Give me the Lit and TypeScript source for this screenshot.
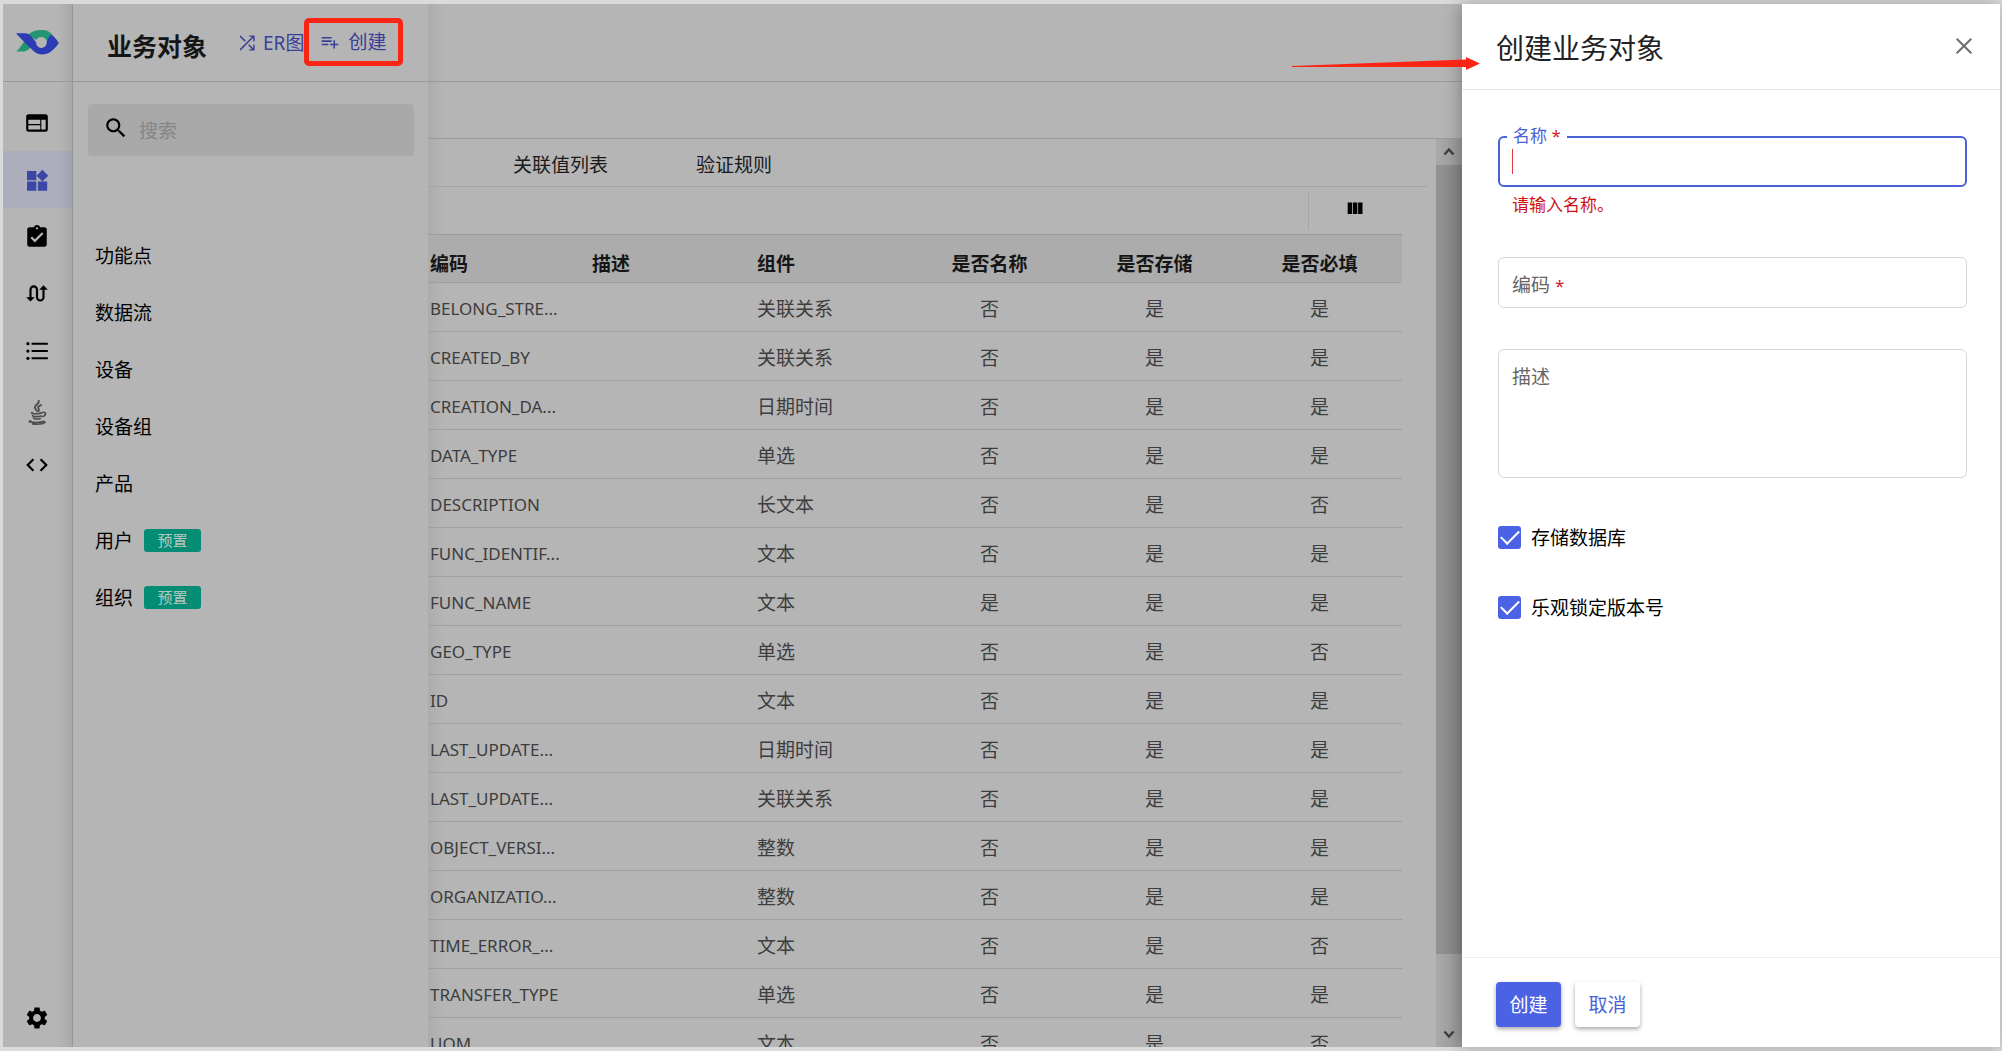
import { LitElement, html, css, svg } from "lit";
import { customElement } from "lit/decorators.js";
import { classMap } from "lit/directives/class-map.js";

const icons: Record<string, unknown> = {
  web: svg`<path d="M20 4H4c-1.1 0-1.99.9-1.99 2L2 18c0 1.1.9 2 2 2h16c1.1 0 2-.9 2-2V6c0-1.1-.9-2-2-2zm-5 14H4v-4h11v4zm0-5H4V9h11v4zm5 5h-4V9h4v9z"/>`,
  widgets: svg`<path d="M2.8 3.6h8.6v8.6H2.8zM2.8 13.4h8.6V22H2.8zM12.8 13.4h8.6V22h-8.6zM17 2.6l5.4 5.4-5.4 5.4L11.600 8z"/>`,
  task: svg`<path d="M19 3h-4.180C14.400 1.840 13.300 1 12 1c-1.300 0-2.400.84-2.820 2H5c-1.100 0-2 .9-2 2v14c0 1.100.9 2 2 2h14c1.100 0 2-.9 2-2V5c0-1.100-.9-2-2-2zm-7 0c.55 0 1 .45 1 1s-.45 1-1 1-1-.45-1-1 .45-1 1-1zm-2 14l-4-4 1.410-1.410L10 14.170l6.590-6.590L18 9l-8 8z"/>`,
  flow: svg`<path d="M18 4l-4 4h3v7c0 1.100-.9 2-2 2s-2-.9-2-2V8c0-2.210-1.790-4-4-4S5 5.790 5 8v7H2l4 4 4-4H7V8c0-1.100.9-2 2-2s2 .9 2 2v7c0 2.210 1.790 4 4 4s4-1.790 4-4V8h3l-4-4z"/>`,
  list: svg`<path d="M7 4.300h15v2H7zM7 11h15v2H7zM7 17.700h15v2H7z"/><circle cx="3.600" cy="5.300" r="1.500"/><circle cx="3.600" cy="12" r="1.500"/><circle cx="3.600" cy="18.700" r="1.500"/>`,
  java: svg`<g fill="none" stroke="#4d4d4d" stroke-linecap="round"><path stroke-width="1.700" d="M13.500 1.500c1.500 3-4.800 4.200-3.300 7.200.4.800 1.300 1.400 1.600 2.300M15.800 5.600c-2.600 1-3.500 2.200-2.300 3.600.7.900.3 1.500-.4 2"/><path stroke-width="1.500" d="M7.500 12.600c-2 .9 3 1.600 8.700.2M8 15.200c-.5 1.300 5 1.300 7.500.4M8.800 17.600c0 1 4 1.200 6.200.3M17.500 12.300c3.600-.3 2.800 3.200-.6 3.900M6 20c-5 1.600 8 2.500 12.500.6M8 23c4.500.5 9.500 0 11.500-1.400"/></g>`,
  code: svg`<path d="M9.400 16.600L4.800 12l4.600-4.600L8 6l-6 6 6 6 1.400-1.400zm5.200 0l4.600-4.600-4.600-4.600L16 6l6 6-6 6-1.400-1.400z"/>`,
  gear: svg`<path fill-rule="evenodd" d="M19.140 12.940c.04-.3.06-.61.06-.94 0-.32-.02-.64-.07-.94l2.030-1.580c.18-.14.23-.41.12-.61l-1.920-3.320c-.12-.22-.37-.29-.59-.22l-2.390.96c-.5-.38-1.030-.7-1.620-.94L14.400 2.810c-.04-.24-.24-.41-.48-.41h-3.840c-.24 0-.43.17-.47.41l-.36 2.540c-.59.24-1.130.57-1.620.94l-2.390-.96c-.22-.08-.47 0-.59.22L2.740 8.870c-.12.21-.08.47.12.61l2.030 1.580c-.05.3-.09.63-.09.94s.02.64.07.94l-2.030 1.580c-.18.14-.23.41-.12.61l1.920 3.320c.12.22.37.29.59.22l2.390-.96c.5.38 1.030.7 1.620.94l.36 2.540c.05.24.24.41.48.41h3.840c.24 0 .44-.17.47-.41l.36-2.540c.59-.24 1.130-.56 1.620-.94l2.390.96c.22.08.47 0 .59-.22l1.920-3.320c.12-.22.07-.47-.12-.61l-2.010-1.580zM12 15.600c-1.980 0-3.600-1.620-3.600-3.600s1.620-3.600 3.600-3.600 3.600 1.620 3.600 3.600-1.620 3.600-3.600 3.600z"/>`,
  shuffle: svg`<path fill="none" stroke="currentColor" stroke-width="1.600" d="M4.500 4.500l5.600 5.600M4.500 19.500L19 5M13.800 13.800L19 19M14.500 4.500h5V10M14.500 19.500h5V14"/>`,
  playlistAdd: svg`<path d="M14 10H2v1.900h12V10zm0-4H2v1.900h12V6zm4 8v-4h-1.900v4h-4v1.900h4v4H18v-4h4V14h-4zM2 15.900h8V14H2v1.900z"/>`,
  search: svg`<path d="M15.500 14h-.79l-.28-.27C15.410 12.590 16 11.110 16 9.500 16 5.910 13.090 3 9.500 3S3 5.910 3 9.500 5.910 16 9.500 16c1.610 0 3.090-.59 4.230-1.570l.27.28v.79l5 4.990L20.490 19l-4.990-5zm-6 0C7.010 14 5 11.990 5 9.500S7.010 5 9.500 5 14 7.010 14 9.500 11.990 14 9.500 14z"/>`,
  columns: svg`<path d="M4 6h4.800v12.500H4zM9.700 6h4.800v12.500H9.700zM15.400 6h4.800v12.500h-4.800z"/>`,
  close: svg`<path fill="none" stroke="currentColor" stroke-width="2.200" d="M4 4l16 16M20 4L4 20"/>`,
  up: svg`<path fill="none" stroke="currentColor" stroke-width="4.500" d="M3 17l9-10 9 10"/>`,
  down: svg`<path fill="none" stroke="currentColor" stroke-width="4.500" d="M3 7l9 10 9-10"/>`,
};

const icon = (name: string, cls = "i26") =>
  html`<svg class="icon ${cls}" viewBox="0 0 24 24" aria-hidden="true">${icons[name]}</svg>`;

const nav = [
  ["web", "页面"],
  ["widgets", "业务对象"],
  ["task", "任务"],
  ["flow", "流程"],
  ["list", "列表"],
  ["java", "Java"],
  ["code", "代码"],
];

const objects = [
  { name: "功能点" },
  { name: "数据流" },
  { name: "设备" },
  { name: "设备组" },
  { name: "产品" },
  { name: "用户", preset: true },
  { name: "组织", preset: true },
];

const heads = ["编码", "描述", "组件", "是否名称", "是否存储", "是否必填"];

const rows = [
  ["BELONG_STRE...", "关联关系", "否", "是", "是"],
  ["CREATED_BY", "关联关系", "否", "是", "是"],
  ["CREATION_DA...", "日期时间", "否", "是", "是"],
  ["DATA_TYPE", "单选", "否", "是", "是"],
  ["DESCRIPTION", "长文本", "否", "是", "否"],
  ["FUNC_IDENTIF...", "文本", "否", "是", "是"],
  ["FUNC_NAME", "文本", "是", "是", "是"],
  ["GEO_TYPE", "单选", "否", "是", "否"],
  ["ID", "文本", "否", "是", "是"],
  ["LAST_UPDATE...", "日期时间", "否", "是", "是"],
  ["LAST_UPDATE...", "关联关系", "否", "是", "是"],
  ["OBJECT_VERSI...", "整数", "否", "是", "是"],
  ["ORGANIZATIO...", "整数", "否", "是", "是"],
  ["TIME_ERROR_...", "文本", "否", "是", "否"],
  ["TRANSFER_TYPE", "单选", "否", "是", "是"],
  ["UOM", "文本", "否", "是", "否"],
];

@customElement("app-root")
export class AppRoot extends LitElement {
  static styles = css`
    :host {
      display: block;
      font-family: "Noto Sans", "Noto Sans CJK SC", sans-serif;
      font-size: 19px;
      line-height: 28px;
      color: #000;
    }
    * {
      box-sizing: border-box;
    }
    button,
    input,
    textarea {
      font: inherit;
      color: inherit;
      border: 0;
      background: none;
      padding: 0;
      margin: 0;
      outline: 0;
    }
    a {
      color: inherit;
      text-decoration: none;
    }
    .icon {
      display: block;
      flex: none;
      fill: currentColor;
    }
    .i26 { width: 26px; height: 26px; }
    .i22 { width: 22px; height: 22px; }
    .i20 { width: 20px; height: 20px; }
    .i12 { width: 12px; height: 12px; }

    .frame {
      position: relative;
      height: 100vh;
      padding: 4px 2px 4px 3px;
      background: #dadada;
      display: grid;
      grid-template-columns: 70px 355px minmax(0, 1fr) 538px;
      grid-template-rows: minmax(0, 1fr);
      overflow: hidden;
    }

    .rail {
      display: flex;
      flex-direction: column;
      border-right: 1px solid #969696;
      background: linear-gradient(90deg, #b5b5b5 80%, #a9a9a9);
    }
    .logo {
      height: 78px;
      flex: none;
      display: flex;
      align-items: center;
      padding-left: 13px;
      border-bottom: 1px solid #9b9b9b;
    }
    .menu {
      flex: 1;
      display: flex;
      flex-direction: column;
      padding-top: 12px;
    }
    .menu a {
      height: 57px;
      display: flex;
      align-items: center;
      padding-left: 21px;
    }
    .menu a.active {
      color: #3b46a6;
      background: linear-gradient(90deg, #adaebb 80%, #a2a3b0);
    }
    .menu a.low {
      padding-top: 8px;
    }
    .settings {
      display: flex;
      padding: 16px 21px;
    }

    .panel {
      background: #b5b5b5;
    }
    .panel-head {
      height: 78px;
      padding: 0 24px 0 34px;
      display: flex;
      align-items: center;
      border-bottom: 1px solid #9b9b9b;
      color: #3a4096;
      white-space: nowrap;
    }
    .panel-head h1 {
      margin: 0;
      width: 129px;
      font-size: 25px;
      line-height: 36px;
      font-weight: 700;
      color: #151515;
      padding-top: 6px;
    }
    .er {
      display: flex;
      align-items: center;
      gap: 5px;
      width: 68px;
    }
    .mark {
      width: 99px;
      height: 48px;
      margin-bottom: 2px;
      border: 5px solid #fb2516;
      border-radius: 5px;
      display: flex;
      flex: none;
      align-items: center;
      justify-content: center;
    }
    .mark button {
      display: flex;
      align-items: center;
      gap: 8px;
      cursor: pointer;
    }
    .search {
      margin: 22px 14px 0 15px;
      height: 52px;
      border-radius: 4px;
      background: #a9a9a9;
      display: flex;
      align-items: center;
      gap: 10px;
      padding: 0 15px;
    }
    .search .icon {
      margin-bottom: 4px;
    }
    .search input {
      flex: 1;
      min-width: 0;
      height: 32px;
      padding-top: 2px;
    }
    .search input::placeholder {
      color: #858585;
      opacity: 1;
    }
    .objects {
      list-style: none;
      margin: 71px 0 0;
      padding: 0 0 0 22px;
    }
    .objects a {
      height: 57px;
      display: flex;
      align-items: center;
      gap: 11px;
    }
    .badge {
      width: 57px;
      height: 23px;
      border-radius: 3px;
      background: #058c74;
      color: #b5c9c5;
      font-size: 15px;
      line-height: 23px;
      text-align: center;
    }

    .main {
      display: flex;
      flex-direction: column;
      min-width: 0;
      color: #1a1a1a;
      background:
        linear-gradient(90deg, rgba(0, 0, 0, 0.05), transparent 16px),
        #b5b5b5;
    }
    .main-top {
      height: 78px;
      flex: none;
      border-bottom: 1px solid #9b9b9b;
    }
    .main-sub {
      height: 57px;
      flex: none;
      border-bottom: 1px solid #9b9b9b;
    }
    .scroll {
      flex: 1;
      min-height: 0;
      display: flex;
    }
    .content {
      flex: 1;
      min-width: 0;
      overflow: hidden;
    }
    .tabs {
      height: 48px;
      margin-right: 9px;
      padding: 4px 0 0 85px;
      display: flex;
      align-items: center;
      gap: 88px;
      border-bottom: 1px solid #a4a4a4;
    }
    .tools {
      height: 47px;
      margin-right: 34px;
      display: flex;
      align-items: center;
      justify-content: flex-end;
    }
    .tools button {
      width: 94px;
      height: 39px;
      display: flex;
      align-items: center;
      padding: 0 0 6px 35px;
      border-left: 1px solid #a6a6a6;
      color: #000;
    }
    .grid-wrap {
      margin-right: 34px;
    }
    table {
      width: 100%;
      table-layout: fixed;
      border-collapse: separate;
      border-spacing: 0;
    }
    th,
    td {
      width: 165px;
      height: 49px;
      padding: 4px 15px 0;
      border-bottom: 1px solid #9f9f9f;
      text-align: center;
      white-space: nowrap;
      color: #3d3d3d;
      font-weight: 400;
    }
    th {
      padding-top: 10px;
      border-top: 1px solid #9b9b9b;
      background: #acacac;
      color: #161616;
      font-weight: 700;
    }
    .left {
      text-align: left;
    }
    .first {
      width: auto;
      padding-left: 2px;
    }
    .code {
      font-size: 17px;
    }
    .bar {
      width: 26px;
      display: flex;
      flex-direction: column;
      color: #3d3d3d;
      background: linear-gradient(90deg, #a9a9a9, #9b9b9b);
    }
    .bar button {
      height: 26px;
      display: grid;
      place-items: center;
    }
    .thumb {
      flex: 788;
      background: linear-gradient(90deg, #939393, #878787);
    }
    .track {
      flex: 67;
    }

    .drawer {
      display: flex;
      flex-direction: column;
      background: #fff;
      box-shadow: -2px 0 16px rgba(0, 0, 0, 0.28);
    }
    .drawer-head {
      height: 86px;
      flex: none;
      display: flex;
      align-items: center;
      justify-content: space-between;
      padding: 2px 25px 0 34px;
      border-bottom: 1px solid #e6e6e6;
    }
    .drawer-head h2 {
      margin: 0;
      font-size: 28px;
      line-height: 40px;
      font-weight: 400;
      color: #222;
    }
    .drawer-head button {
      color: #6e6e6e;
      margin-bottom: 4px;
    }
    .form {
      flex: 1;
      display: flex;
      flex-direction: column;
      padding: 46px 33px 0 36px;
    }
    .field {
      position: relative;
    }
    .field input,
    .field textarea {
      display: block;
      width: 100%;
      height: 51px;
      padding: 0 14px;
      border: 1px solid #d6d6d6;
      border-radius: 6px;
      color: #222;
    }
    .field textarea {
      height: 129px;
      padding: 14px;
      resize: none;
    }
    .field label {
      position: absolute;
      left: 14px;
      top: 14px;
      color: #666;
      pointer-events: none;
    }
    .field .focus {
      border: 2px solid #4a61d6;
      caret-color: transparent;
    }
    .field .float {
      left: 9px;
      top: -14px;
      padding: 0 6px;
      background: #fff;
      color: #4a61d6;
      font-size: 17px;
    }
    .star {
      color: #d3222a;
      font-size: 17px;
    }
    .caret {
      position: absolute;
      left: 14px;
      top: 13px;
      width: 1px;
      height: 25px;
      background: #e0383e;
    }
    .error {
      margin: 4px 0 38px;
      padding-left: 14px;
      font-size: 17px;
      color: #cf1212;
    }
    .gap {
      margin-top: 41px;
    }
    .check {
      display: flex;
      align-items: center;
      gap: 10px;
      height: 28px;
      margin-top: 42px;
    }
    .gap + .check {
      margin-top: 45px;
    }
    .check span {
      padding-top: 2px;
    }
    .check input {
      appearance: none;
      width: 23px;
      height: 23px;
      border-radius: 3px;
      display: grid;
      place-items: center;
      background: #4c62e4;
    }
    .check input:checked::before {
      content: "";
      width: 16px;
      height: 8px;
      border-left: 2px solid #fff;
      border-bottom: 2px solid #fff;
      transform: translateY(-2px) rotate(-45deg);
    }
    .actions {
      display: flex;
      gap: 14px;
      padding: 24px 34px 20px;
      border-top: 1px solid #efefef;
    }
    .btn {
      width: 65px;
      height: 45px;
      border-radius: 4px;
      background: #fff;
      color: #4a61d6;
      box-shadow: 0 2px 4px rgba(0, 0, 0, 0.35);
    }
    .btn.primary {
      background: #4c62e4;
      color: #fff;
    }
    .arrow {
      position: absolute;
      right: 522px;
      top: 56px;
      width: 188px;
      height: 15px;
      pointer-events: none;
    }
  `;

  render() {
    return html`
      <div class="frame">
        <nav class="rail">
          <div class="logo">
            <svg width="43" height="25" viewBox="0 0 43 25" aria-hidden="true">
              <path fill="#249573" d="M0 21.500C3 20 5 15 9 11l7 5c-3 3-5 5.500-9 5.500zM12 5C16 1 20 0 26 0c5 0 8 2 10 4.500L31 11c-2-4.500-8-6-11-1z" />
              <path fill="#2c3db4" d="M0 3.200h9c3 0 5 1.500 7 4l4.200 5.200a5.200 5.200 0 0 0 10.400.6c.2-3 2-6.500 4.600-8.500C38 6 41 10 42.800 13c-2.500 4-6 7.500-10 10-4 2-10 2-13.500-.5C14 18 8 12 0 3.200z" />
            </svg>
          </div>
          <div class="menu">
            ${nav.map(
              ([n, label]) => html`<a
                href="#"
                aria-label=${label}
                class=${classMap({ active: n === "widgets", low: n === "java" })}
                >${icon(n)}</a
              >`
            )}
          </div>
          <a class="settings" href="#" aria-label="设置">${icon("gear")}</a>
        </nav>

        <section class="panel">
          <header class="panel-head">
            <h1>业务对象</h1>
            <a class="er" href="#">${icon("shuffle", "i22")}<span>ER图</span></a>
            <div class="mark">
              <button>${icon("playlistAdd", "i20")}<span>创建</span></button>
            </div>
          </header>
          <div class="search">
            ${icon("search")}
            <input type="search" placeholder="搜索" aria-label="搜索" />
          </div>
          <ul class="objects">
            ${objects.map(
              (o) => html`<li>
                <a href="#"><span>${o.name}</span>${o.preset ? html`<span class="badge">预置</span>` : ""}</a>
              </li>`
            )}
          </ul>
        </section>

        <main class="main">
          <div class="main-top"></div>
          <div class="main-sub"></div>
          <div class="scroll">
            <div class="content">
              <div class="tabs"><a href="#">关联值列表</a><a href="#">验证规则</a></div>
              <div class="tools"><button aria-label="列设置">${icon("columns", "i22")}</button></div>
              <div class="grid-wrap">
                <table>
                  <thead>
                    <tr>
                      ${heads.map(
                        (h, i) => html`<th class=${classMap({ left: i < 3, first: i === 0 })}>${h}</th>`
                      )}
                    </tr>
                  </thead>
                  <tbody>
                    ${rows.map(
                      ([code, comp, a, b, c]) => html`<tr>
                        <td class="left first code">${code}</td>
                        <td></td>
                        <td class="left">${comp}</td>
                        <td>${a}</td>
                        <td>${b}</td>
                        <td>${c}</td>
                      </tr>`
                    )}
                  </tbody>
                </table>
              </div>
            </div>
            <div class="bar">
              <button aria-label="向上滚动">${icon("up", "i12")}</button>
              <div class="thumb"></div>
              <div class="track"></div>
              <button aria-label="向下滚动">${icon("down", "i12")}</button>
            </div>
          </div>
        </main>

        <aside class="drawer">
          <header class="drawer-head">
            <h2>创建业务对象</h2>
            <button aria-label="关闭">${icon("close", "i22")}</button>
          </header>
          <form class="form" id="create">
            <div class="field">
              <input class="focus" id="name" />
              <label class="float" for="name">名称 <span class="star">*</span></label>
              <span class="caret"></span>
            </div>
            <div class="error">请输入名称。</div>
            <div class="field">
              <input id="code" />
              <label for="code">编码 <span class="star">*</span></label>
            </div>
            <div class="field gap">
              <textarea id="desc"></textarea>
              <label for="desc">描述</label>
            </div>
            <label class="check"><input type="checkbox" checked /><span>存储数据库</span></label>
            <label class="check"><input type="checkbox" checked /><span>乐观锁定版本号</span></label>
          </form>
          <footer class="actions">
            <button class="btn primary" type="submit" form="create">创建</button>
            <button class="btn" type="button">取消</button>
          </footer>
        </aside>

        <svg class="arrow" viewBox="0 0 188 15" aria-hidden="true">
          <path fill="#fb2516" d="M0 10L174 3.500V1L188 7.500 174 14V11L0 11z" />
        </svg>
      </div>
    `;
  }
}
